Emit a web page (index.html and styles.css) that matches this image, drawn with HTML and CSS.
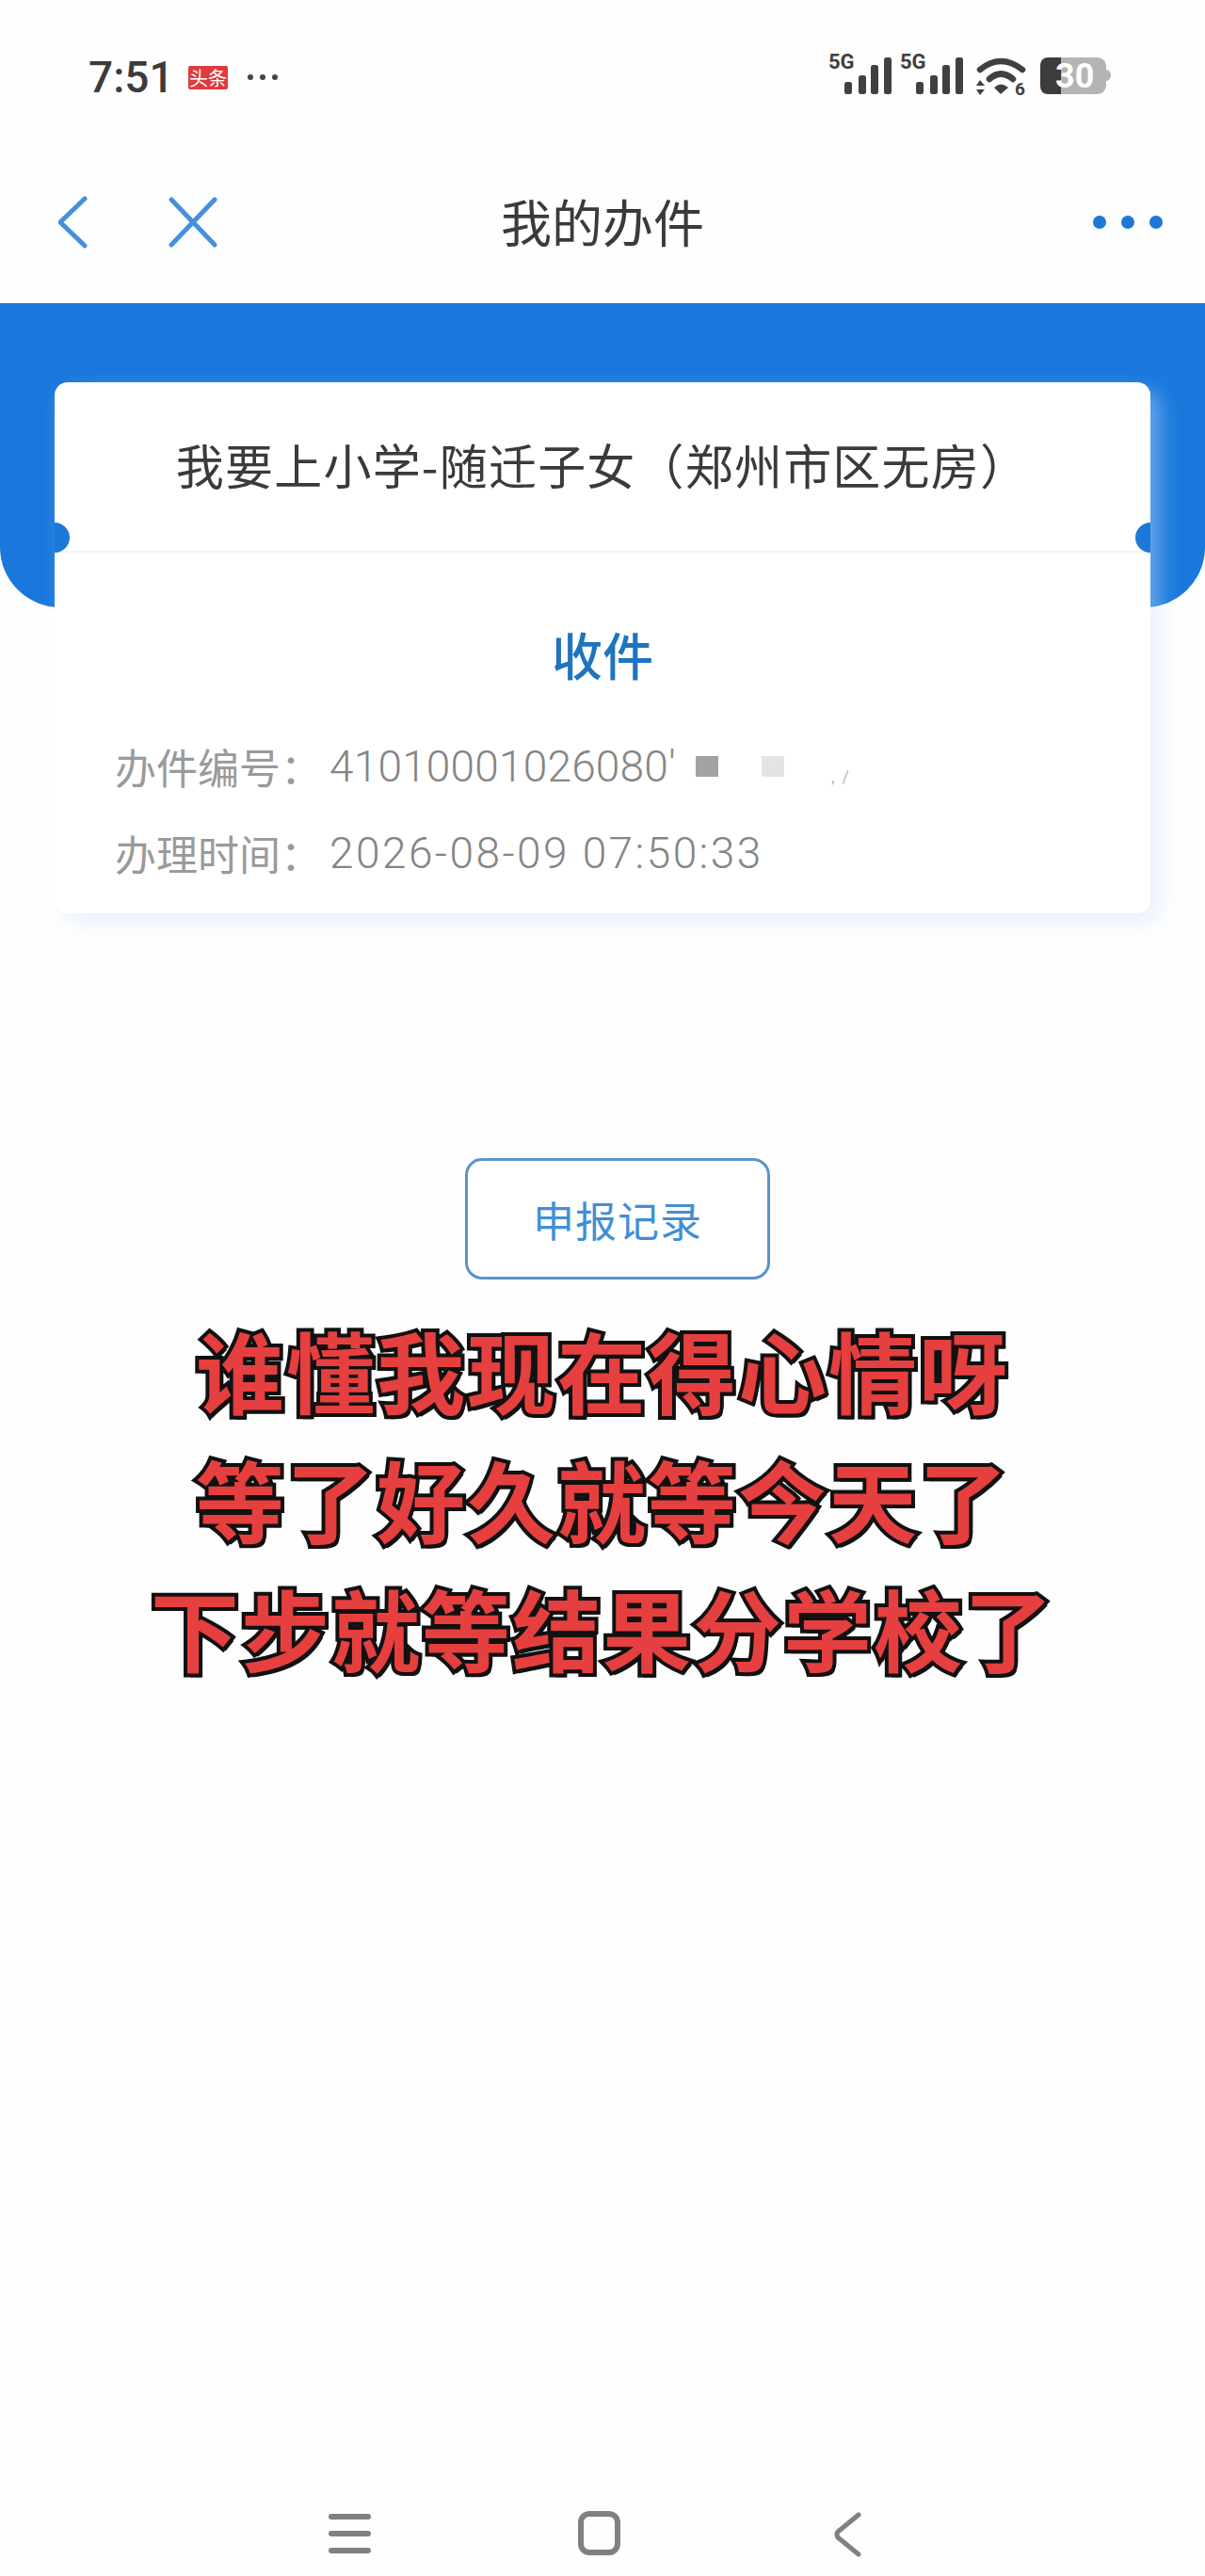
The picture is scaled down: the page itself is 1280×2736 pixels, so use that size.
FILE: index.html
```html
<!DOCTYPE html>
<html lang="zh-CN">

<head>
    <meta charset="UTF-8">
    <meta name="viewport" content="width=device-width, initial-scale=1.0">
    <title>我的办件</title>
    <link rel="stylesheet" href="styles.css">
</head>

<body>
    <div class="page">
        <div class="status-bar">
            <div class="status-left">
                <span class="status-time">7:51</span>
                <span class="status-badge">头条</span>
                <span class="status-dots"><i></i><i></i><i></i></span>
            </div>
            <svg class="status-icons" viewBox="0 0 330 90" width="330" height="90">
                <g fill="#404040">
                    <text x="20" y="43" class="net-label">5G</text>
                    <rect x="37" y="57" width="8" height="13" rx="2.5"/>
                    <rect x="52" y="50" width="8" height="20" rx="2.5"/>
                    <rect x="65" y="39" width="8" height="31" rx="2.5"/>
                    <rect x="79" y="31" width="8" height="39" rx="2.5"/>
                    <text x="96" y="43" class="net-label">5G</text>
                    <rect x="113" y="57" width="8" height="13" rx="2.5"/>
                    <rect x="128" y="50" width="8" height="20" rx="2.5"/>
                    <rect x="141" y="39" width="8" height="31" rx="2.5"/>
                    <rect x="155" y="31" width="8" height="39" rx="2.5"/>
                </g>
                <path d="M181 44 Q203 26 226 44" fill="none" stroke="#404040" stroke-width="6.5" stroke-linecap="round"/>
                <path d="M191 54 Q203 43 216 54" fill="none" stroke="#404040" stroke-width="6.5" stroke-linecap="round"/>
                <path d="M196 63 Q203 56 211 63 L203 70 Z" fill="#404040"/>
                <path d="M177 61 L181 55 L186 61 Z M177 65 L186 65 L181 71 Z" fill="#404040"/>
                <text x="218" y="71" class="wifi-label">6</text>
                <rect x="245" y="31" width="70" height="39" rx="9" fill="#b4b4b4"/>
                <path d="M315 44 q5 1 5 6 q0 5 -5 6 Z" fill="#b4b4b4"/>
                <path d="M254 31 H267 V70 H254 Q245 70 245 61 V40 Q245 31 254 31 Z" fill="#3c3c3c"/>
                <text x="261" y="63" class="battery-label">30</text>
            </svg>
        </div>

        <div class="nav-bar">
            <svg class="nav-back" viewBox="0 0 32 56" width="32" height="56">
                <path d="M28 3 L2 28 L28 53" fill="none" stroke="#4590dc" stroke-width="5" stroke-linecap="round"/>
            </svg>
            <svg class="nav-close" viewBox="0 0 56 56" width="56" height="56">
                <path d="M6 4 L52 52 M52 4 L6 52" fill="none" stroke="#4590dc" stroke-width="5" stroke-linecap="round"/>
            </svg>
            <h1 class="nav-title">我的办件</h1>
            <span class="nav-more"><i></i><i></i><i></i></span>
        </div>

        <div class="hero"></div>

        <div class="card">
            <div class="card-title">我要上小学-随迁子女（郑州市区无房）</div>
            <div class="card-body">
                <div class="card-status">收件</div>
                <div class="card-row">
                    <span class="row-label">办件编号：</span>
                    <span class="row-value row-value-id">41010001026080'</span>
                    <i class="mask mask-dark"></i>
                    <i class="mask mask-light"></i>
                    <span class="row-scrap">,/</span>
                </div>
                <div class="card-row">
                    <span class="row-label">办理时间：</span>
                    <span class="row-value">2026-08-09 07:50:33</span>
                </div>
            </div>
        </div>

        <div class="record-wrap">
            <button class="record-btn" type="button">申报记录</button>
        </div>

        <div class="caption">
            <p>谁懂我现在得心情呀</p>
            <p>等了好久就等今天了</p>
            <p>下步就等结果分学校了</p>
        </div>

        <div class="sys-nav">
            <span class="sys-menu"><i></i><i></i><i></i></span>
            <span class="sys-home"></span>
            <svg class="sys-back" viewBox="0 0 32 50" width="32" height="50">
                <path d="M27 4 L5 22 Q3 25 5 28 L27 46" fill="none" stroke="#808080" stroke-width="5" stroke-linecap="round"/>
            </svg>
        </div>
    </div>
</body>

</html>
```

FILE: styles.css
```css
* {
    box-sizing: border-box;
}

body {
    margin: 0;
    background-color: #fefefe;
    font-family: "Noto Sans CJK SC", Roboto, sans-serif;
}

.page {
    width: 1280px;
    height: 2736px;
    display: flex;
    flex-direction: column;
    overflow: hidden;
}

/* status bar */
.status-bar {
    height: 170px;
    flex-shrink: 0;
    padding: 30px 90px 0 94px;
    display: flex;
    justify-content: space-between;
    align-items: flex-start;
}

.status-left {
    height: 104px;
    display: flex;
    align-items: center;
}

.status-time {
    font-family: Roboto, sans-serif;
    font-size: 46px;
    font-weight: 500;
    color: #3c3c3c;
    width: 106px;
}

.status-badge {
    width: 42px;
    height: 25px;
    line-height: 25px;
    background-color: #e03a3a;
    border-radius: 2px;
    color: #fff;
    font-size: 20px;
    text-align: center;
}

.status-dots {
    display: flex;
    gap: 7px;
    margin-left: 21px;
}

.status-dots i {
    width: 6px;
    height: 6px;
    border-radius: 50%;
    background-color: #444;
}

.net-label {
    font-family: Roboto, sans-serif;
    font-size: 22px;
    font-weight: 700;
}

.wifi-label {
    font-family: Roboto, sans-serif;
    font-size: 19px;
    font-weight: 700;
    fill: #404040;
}

.battery-label {
    font-family: Roboto, sans-serif;
    font-size: 36px;
    font-weight: 700;
    fill: #fff;
}

/* top nav */
.nav-bar {
    height: 152px;
    flex-shrink: 0;
    display: flex;
    align-items: center;
    padding: 0 45px 20px 62px;
}

.nav-close {
    margin-left: 82px;
}

.nav-title {
    flex: 1;
    margin: -4px 0 0;
    padding-right: 113px;
    text-align: center;
    font-size: 54px;
    font-weight: 400;
    color: #3a3a3a;
}

.nav-more {
    display: flex;
    gap: 16px;
}

.nav-more i {
    width: 14px;
    height: 14px;
    border-radius: 50%;
    background-color: #1c78d8;
}

/* blue band behind the card */
.hero {
    height: 323px;
    flex-shrink: 0;
    background-color: #1a78dc;
    border-radius: 0 0 64px 64px;
}

.card {
    width: 1164px;
    height: 564px;
    flex-shrink: 0;
    margin: -239px 0 0 58px;
    background-color: #fff;
    border-radius: 14px;
    box-shadow: 10px 10px 22px rgba(205, 228, 252, 0.45);
    position: relative;
}

.card::before,
.card::after {
    content: "";
    position: absolute;
    top: 149px;
    width: 16px;
    height: 32px;
    background-color: #1c78d8;
}

.card::before {
    left: 0;
    border-radius: 0 16px 16px 0;
}

.card::after {
    right: 0;
    border-radius: 16px 0 0 16px;
}

.card-title {
    height: 181px;
    padding-top: 48px;
    border-bottom: 2px solid #f3f3f3;
    text-align: center;
    font-size: 51px;
    line-height: 78px;
    letter-spacing: 1.2px;
    color: #3a3a3a;
}

.card-body {
    padding: 0 64px;
}

.card-status {
    margin-top: 68px;
    margin-bottom: 33px;
    text-align: center;
    font-size: 54px;
    line-height: 80px;
    color: #1f74bd;
    font-weight: 500;
}

.card-row {
    height: 92px;
    display: flex;
    align-items: center;
    font-size: 44px;
    color: #9a9a9a;
}

.row-label {
    width: 228px;
}

.row-value {
    font-family: Roboto, sans-serif;
    font-size: 46px;
    font-weight: 300;
    letter-spacing: 2.45px;
    color: #858585;
}

.row-value-id {
    letter-spacing: 0.2px;
}

.mask {
    width: 24px;
    height: 22px;
}

.mask-dark {
    margin-left: 21px;
    background-color: #a2a2a2;
}

.mask-light {
    margin-left: 46px;
    background-color: #e4e4e4;
}

.row-scrap {
    margin-left: 50px;
    margin-top: 22px;
    font-family: Roboto, sans-serif;
    font-size: 18px;
    line-height: 16px;
    letter-spacing: 8px;
    color: #b8b8b8;
}

/* button */
.record-wrap {
    margin-top: 260px;
    padding-left: 494px;
}

.record-btn {
    display: block;
    width: 324px;
    height: 129px;
    background-color: #fff;
    border: 3px solid #5a94cc;
    border-radius: 18px;
    font-family: "Noto Sans CJK SC", sans-serif;
    font-size: 44px;
    letter-spacing: 1px;
    color: #3f8fd6;
}

/* red caption over the screenshot */
.caption {
    margin-top: 27px;
}

.caption p {
    margin: 0;
    height: 137px;
    line-height: 137px;
    text-align: center;
    font-size: 94px;
    font-weight: 700;
    letter-spacing: 2px;
    color: #e63f3f;
    -webkit-text-stroke: 8px #111;
    paint-order: stroke fill;
    text-shadow: 3px 4px 0 #111;
}

/* system nav */
.sys-nav {
    margin-top: auto;
    height: 90px;
    display: flex;
    align-items: flex-start;
    padding-top: 21px;
    padding-left: 349px;
}

.sys-menu {
    width: 45px;
    height: 42px;
    display: flex;
    flex-direction: column;
    justify-content: space-between;
    margin-top: 3px;
}

.sys-menu i {
    height: 6px;
    border-radius: 3px;
    background-color: #808080;
}

.sys-home {
    width: 45px;
    height: 47px;
    margin-left: 220px;
    border: 6px solid #808080;
    border-radius: 12px;
}

.sys-back {
    margin-left: 226px;
}
```
